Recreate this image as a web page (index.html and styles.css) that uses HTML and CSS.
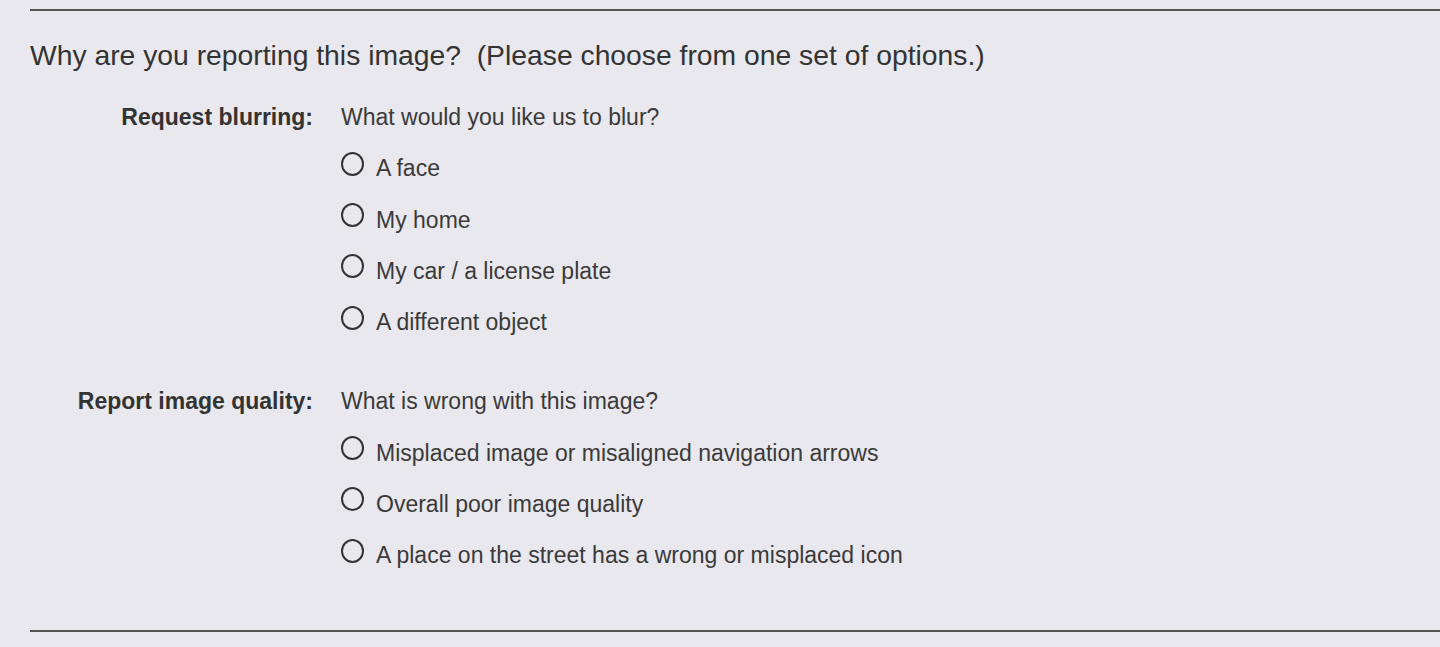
FILE: index.html
```html
<!DOCTYPE html>
<html>
<head>
    <meta charset="UTF-8">
    <title>Report an image</title>
    <link rel="stylesheet" href="styles.css">
</head>
<body>
    <div class="panel">
        <hr class="rule">
        <h2 class="question">Why are you reporting this image?&nbsp; (Please choose from one set of options.)</h2>

        <div class="group">
            <div class="group-label">Request blurring:</div>
            <div class="group-body">
                <div class="prompt">What would you like us to blur?</div>
                <label class="option"><input type="radio" name="reason" value="face"><span>A face</span></label>
                <label class="option"><input type="radio" name="reason" value="home"><span>My home</span></label>
                <label class="option"><input type="radio" name="reason" value="car"><span>My car / a license plate</span></label>
                <label class="option"><input type="radio" name="reason" value="object"><span>A different object</span></label>
            </div>
        </div>

        <div class="group second">
            <div class="group-label">Report image quality:</div>
            <div class="group-body">
                <div class="prompt">What is wrong with this image?</div>
                <label class="option"><input type="radio" name="reason" value="misplaced"><span>Misplaced image or misaligned navigation arrows</span></label>
                <label class="option"><input type="radio" name="reason" value="poor"><span>Overall poor image quality</span></label>
                <label class="option"><input type="radio" name="reason" value="icon"><span>A place on the street has a wrong or misplaced icon</span></label>
            </div>
        </div>

        <hr class="rule bottom">
    </div>
</body>
</html>
```

FILE: styles.css
```css
body {
    margin: 0;
    background-color: #e9e8ee;
    font-family: "Liberation Sans", Arial, sans-serif;
    color: #333;
}
.panel {
    margin-left: 30px;
    padding-top: 9px;
}
.rule {
    margin: 0;
    border: none;
    border-top: 2px solid #555;
    height: 0;
}
.rule.bottom {
    margin-top: 49px;
}
.question {
    margin: 28px 0 21px 0;
    font-size: 28.3px;
    font-weight: normal;
    line-height: 32px;
    color: #333;
}
.group {
    display: grid;
    grid-template-columns: 283px 1fr;
    column-gap: 28px;
    font-size: 23px;
    line-height: 51.25px;
}
.group.second {
    margin-top: 28px;
}
.group-label {
    text-align: right;
    font-weight: bold;
    color: #333;
}
.prompt {
    color: #3a3a3a;
}
.option {
    display: flex;
    align-items: center;
    color: #3a3a3a;
}
.option input {
    appearance: none;
    -webkit-appearance: none;
    width: 23px;
    height: 24px;
    margin: 0 12px 0 0;
    border: 2px solid #333;
    border-radius: 50%;
    background: transparent;
    box-sizing: border-box;
    position: relative;
    top: -5px;
}
```
